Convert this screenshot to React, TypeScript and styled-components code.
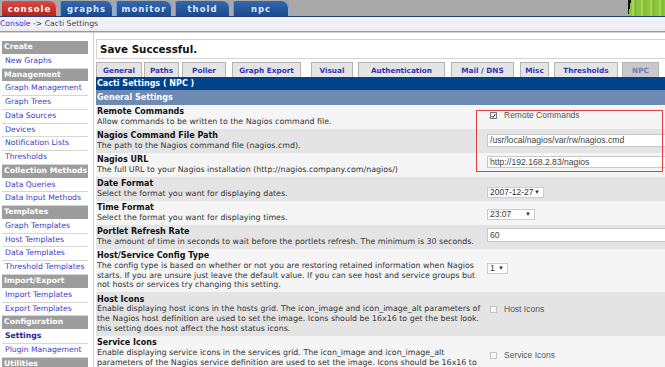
import React from 'react';
import styled, { createGlobalStyle } from 'styled-components';

const GlobalStyle = createGlobalStyle`
  html, body {
    margin: 0;
    padding: 0;
    background: #ffffff;
    overflow: hidden;
  }
  body {
    font-family: "DejaVu Sans", Verdana, sans-serif;
  }
`;

const Page = styled.div`
  width: 665px;
  height: 367px;
  overflow: hidden;
  display: flex;
  flex-direction: column;
`;

/* ---------- top navigation ---------- */

const TopBar = styled.div`
  height: 16px;
  flex: none;
  display: flex;
  align-items: flex-end;
  gap: 3px;
  padding-left: 2px;
  background: #a9a9a9;
  border-bottom: 1px solid #23407a;
`;

const TopTab = styled.div<{ $active?: boolean; $w: number }>`
  width: ${p => p.$w}px;
  height: 15px;
  display: flex;
  align-items: center;
  justify-content: center;
  border-radius: 2px 7px 0 0;
  font: bold 8.5px "DejaVu Sans", Verdana, sans-serif;
  letter-spacing: 1px;
  color: ${p => (p.$active ? '#ffffff' : '#dce6f6')};
  background: ${p =>
    p.$active
      ? 'linear-gradient(#d64c45, #b3241f)'
      : 'linear-gradient(#3467ad, #1c4b8e)'};
  box-shadow: ${p =>
    p.$active
      ? 'inset -1px 0 0 #e88a84'
      : 'inset 1px 0 0 #7198d0, inset -1px 0 0 #8fb0de'};
`;

const Corner = styled.div`
  margin-left: auto;
  width: 37px;
  height: 16px;
  background:
    linear-gradient(100deg, #111 0 3px, transparent 3px),
    repeating-linear-gradient(90deg, #8cc43c 0 4px, #a6d65a 4px 6px, #86bd36 6px 9px);
`;

const Breadcrumb = styled.div`
  height: 14px;
  flex: none;
  line-height: 14px;
  font-size: 7.7px;
  color: #444;
  background: linear-gradient(#f3f4fa 0, #eceef6 40%, #f4f2f8 60%, #e9e9ef 100%);
  border-bottom: 1px solid #9a9a9a;
  box-shadow: 0 1px 0 #d4d4d4;
  white-space: nowrap;
`;

const Crumb = styled.span`
  color: #3535c8;
`;

/* ---------- layout ---------- */

const Body = styled.div`
  flex: 1;
  min-height: 0;
  display: flex;
`;

const Sidebar = styled.div`
  width: 86px;
  flex: none;
  padding: 9px 5px 0 2px;
  border-right: 1px solid #cfcfcf;
`;

const MenuHeader = styled.div`
  height: 12.78px;
  line-height: 12.78px;
  padding-left: 2px;
  background: #9d9d9d;
  border-bottom: 1px solid #ffffff;
  color: #ffffff;
  font-weight: bold;
  font-size: 7.7px;
  white-space: nowrap;
  overflow: hidden;
`;

const MenuItem = styled.div<{ $active?: boolean }>`
  height: 12.78px;
  line-height: 12.78px;
  padding-left: 3px;
  border-bottom: 1px solid #d6d6d6;
  font-size: 7.7px;
  font-weight: ${p => (p.$active ? 'bold' : 'normal')};
  color: ${p => (p.$active ? '#1c1c96' : '#3b3bc4')};
  white-space: nowrap;
  overflow: hidden;
`;

const Main = styled.div`
  flex: 1;
  min-width: 0;
  padding: 7px 0 0 2px;
  overflow: hidden;
`;

const SaveBox = styled.div`
  height: 18px;
  line-height: 18px;
  border: 1px solid #d4d4d4;
  border-right: none;
  padding-left: 3px;
  font-weight: bold;
  font-size: 10.3px;
  color: #111;
`;

const TabRow = styled.div`
  display: flex;
  align-items: flex-end;
  height: 15px;
  margin-top: 3px;
`;

const Tab = styled.div<{ $w: number; $ml: number; $active?: boolean }>`
  width: ${p => p.$w}px;
  margin-left: ${p => p.$ml}px;
  height: 15px;
  box-sizing: border-box;
  display: flex;
  align-items: center;
  justify-content: center;
  border: 1px solid #b4b4b4;
  border-bottom: none;
  background: ${p => (p.$active ? '#c9c9c9' : '#e4e4e4')};
  color: ${p => (p.$active ? '#7878bc' : '#3333b3')};
  font-weight: bold;
  font-size: 7.3px;
  white-space: nowrap;
`;

const Table = styled.div`
  position: relative;
`;

const TitleBar = styled.div`
  height: 13px;
  line-height: 13px;
  padding-left: 1px;
  background: #01438b;
  color: #ffffff;
  font-weight: bold;
  font-size: 8px;
`;

const SectionBar = styled.div`
  height: 15px;
  line-height: 15px;
  padding-left: 1px;
  background: #6e8ab2;
  color: #ffffff;
  font-weight: bold;
  font-size: 8px;
`;

const Row = styled.div<{ $alt: boolean }>`
  display: grid;
  grid-template-columns: 390px 1fr;
  background: ${p => (p.$alt ? '#e4e4e4' : '#f5f5f5')};
`;

const Label = styled.div`
  padding: 2.2px 0 2.2px 1px;
  line-height: 9.8px;
  white-space: nowrap;
`;

const Title = styled.div`
  font-weight: bold;
  font-size: 8px;
  color: #111;
`;

const Desc = styled.div`
  font-size: 7.9px;
  color: #333;
`;

const Value = styled.div<{ $top: number }>`
  padding: ${p => p.$top}px 0 0 1px;
  display: flex;
  align-items: flex-start;
  gap: 7px;
  font-family: "Liberation Sans", Arial, sans-serif;
  font-size: 8.5px;
  color: #555;
  white-space: nowrap;
`;

const TextInput = styled.input<{ $h: number }>`
  width: 190px;
  height: ${p => p.$h}px;
  box-sizing: border-box;
  margin: 0;
  padding: 0 2px;
  border: 1px solid #c8c8c8;
  background: #ffffff;
  font-family: "Liberation Sans", Arial, sans-serif;
  font-size: 8.6px;
  color: #444;
  outline: none;
`;

const SelectBox = styled.div<{ $w: number }>`
  width: ${p => p.$w}px;
  height: 11px;
  box-sizing: border-box;
  display: flex;
  align-items: center;
  justify-content: space-between;
  padding: 0 3px 0 2px;
  border: 1px solid #cccccc;
  background: #ffffff;
  font-size: 8.5px;
  color: #333;
`;

const Arrow = styled.span`
  font-size: 6px;
  color: #333;
`;

const CheckBox = styled.span<{ $on?: boolean }>`
  width: 7px;
  height: 7px;
  margin: 1px 0 0 3px;
  box-sizing: border-box;
  display: inline-flex;
  align-items: center;
  justify-content: center;
  border: 1px solid ${p => (p.$on ? '#7a7a7a' : '#c4c4c4')};
  background: ${p => (p.$on ? '#f2f2f2' : '#f8f8f8')};
`;

const CheckLabel = styled.span`
  line-height: 9px;
`;

const Highlight = styled.div`
  position: absolute;
  left: 380px;
  top: 33px;
  width: 187px;
  height: 62px;
  border: 1px solid #e04040;
  box-sizing: border-box;
  pointer-events: none;
`;

/* ---------- data ---------- */

const topTabs = [
  { name: 'console', w: 55, active: true },
  { name: 'graphs', w: 53 },
  { name: 'monitor', w: 56 },
  { name: 'thold', w: 55 },
  { name: 'npc', w: 56 },
];

const menu: { header: string; items: string[] }[] = [
  { header: 'Create', items: ['New Graphs'] },
  {
    header: 'Management',
    items: ['Graph Management', 'Graph Trees', 'Data Sources', 'Devices', 'Notification Lists', 'Thresholds'],
  },
  { header: 'Collection Methods', items: ['Data Queries', 'Data Input Methods'] },
  { header: 'Templates', items: ['Graph Templates', 'Host Templates', 'Data Templates', 'Threshold Templates'] },
  { header: 'Import/Export', items: ['Import Templates', 'Export Templates'] },
  { header: 'Configuration', items: ['Settings', 'Plugin Management'] },
  { header: 'Utilities', items: [] },
];

const tabs = [
  { name: 'General', w: 46, ml: 0 },
  { name: 'Paths', w: 35, ml: 2 },
  { name: 'Poller', w: 44, ml: 3 },
  { name: 'Graph Export', w: 69, ml: 6 },
  { name: 'Visual', w: 42, ml: 10 },
  { name: 'Authentication', w: 87, ml: 5 },
  { name: 'Mail / DNS', w: 63, ml: 6 },
  { name: 'Misc', w: 29, ml: 6 },
  { name: 'Thresholds', w: 64, ml: 5 },
  { name: 'NPC', w: 37, ml: 4, active: true },
];

type Control =
  | { kind: 'check'; label: string; on?: boolean }
  | { kind: 'text'; value: string; h: number }
  | { kind: 'select'; value: string; w: number };

interface Setting {
  title: string;
  lines: string[];
  top: number;
  control: Control;
}

const settings: Setting[] = [
  {
    title: 'Remote Commands',
    lines: ['Allow commands to be written to the Nagios command file.'],
    top: 6,
    control: { kind: 'check', label: 'Remote Commands', on: true },
  },
  {
    title: 'Nagios Command File Path',
    lines: ['The path to the Nagios command file (nagios.cmd).'],
    top: 5,
    control: { kind: 'text', value: '/usr/local/nagios/var/rw/nagios.cmd', h: 13 },
  },
  {
    title: 'Nagios URL',
    lines: ['The full URL to your Nagios installation (http://nagios.company.com/nagios/)'],
    top: 3,
    control: { kind: 'text', value: 'http://192.168.2.83/nagios', h: 12 },
  },
  {
    title: 'Date Format',
    lines: ['Select the format you want for displaying dates.'],
    top: 10,
    control: { kind: 'select', value: '2007-12-27', w: 57 },
  },
  {
    title: 'Time Format',
    lines: ['Select the format you want for displaying times.'],
    top: 8,
    control: { kind: 'select', value: '23:07', w: 48 },
  },
  {
    title: 'Portlet Refresh Rate',
    lines: ['The amount of time in seconds to wait before the portlets refresh. The minimum is 30 seconds.'],
    top: 3,
    control: { kind: 'text', value: '60', h: 14 },
  },
  {
    title: 'Host/Service Config Type',
    lines: [
      'The config type is based on whether or not you are restoring retained information when Nagios',
      'starts. If you are unsure just leave the default value. If you can see host and service groups but',
      'not hosts or services try changing this setting.',
    ],
    top: 14,
    control: { kind: 'select', value: '1', w: 21 },
  },
  {
    title: 'Host Icons',
    lines: [
      'Enable displaying host icons in the hosts grid. The icon_image and icon_image_alt parameters of',
      'the Nagios host definition are used to set the image. Icons should be 16x16 to get the best look.',
      'this setting does not affect the host status icons.',
    ],
    top: 13,
    control: { kind: 'check', label: 'Host Icons' },
  },
  {
    title: 'Service Icons',
    lines: [
      'Enable displaying service icons in the services grid. The icon_image and icon_image_alt',
      'parameters of the Nagios service definition are used to set the image. Icons should be 16x16 to',
      'get the best look. this setting does not affect the service status icons.',
    ],
    top: 15,
    control: { kind: 'check', label: 'Service Icons' },
  },
];

const Tick = () => (
  <svg width="6" height="6" viewBox="0 0 6 6">
    <path d="M0.8 3.2 L2.4 4.8 L5.3 1" fill="none" stroke="#333" strokeWidth="1.2" />
  </svg>
);

const renderControl = (c: Control) => {
  switch (c.kind) {
    case 'check':
      return (
        <>
          <CheckBox $on={c.on}>{c.on && <Tick />}</CheckBox>
          <CheckLabel>{c.label}</CheckLabel>
        </>
      );
    case 'text':
      return <TextInput $h={c.h} value={c.value} readOnly />;
    case 'select':
      return (
        <SelectBox $w={c.w}>
          <span>{c.value}</span>
          <Arrow>▼</Arrow>
        </SelectBox>
      );
  }
};

export default function App() {
  return (
    <Page>
      <GlobalStyle />
      <TopBar>
        {topTabs.map(t => (
          <TopTab key={t.name} $w={t.w} $active={t.active}>
            {t.name}
          </TopTab>
        ))}
        <Corner />
      </TopBar>
      <Breadcrumb>
        <Crumb>Console</Crumb> -&gt; Cacti Settings
      </Breadcrumb>
      <Body>
        <Sidebar>
          {menu.map(section => (
            <React.Fragment key={section.header}>
              <MenuHeader>{section.header}</MenuHeader>
              {section.items.map(item => (
                <MenuItem key={item} $active={item === 'Settings'}>
                  {item}
                </MenuItem>
              ))}
            </React.Fragment>
          ))}
        </Sidebar>
        <Main>
          <SaveBox>Save Successful.</SaveBox>
          <TabRow>
            {tabs.map(t => (
              <Tab key={t.name} $w={t.w} $ml={t.ml} $active={t.active}>
                {t.name}
              </Tab>
            ))}
          </TabRow>
          <Table>
            <TitleBar>Cacti Settings ( NPC )</TitleBar>
            <SectionBar>General Settings</SectionBar>
            {settings.map((s, i) => (
              <Row key={s.title} $alt={i % 2 === 1}>
                <Label>
                  <Title>{s.title}</Title>
                  {s.lines.map(line => (
                    <Desc key={line}>{line}</Desc>
                  ))}
                </Label>
                <Value $top={s.top}>{renderControl(s.control)}</Value>
              </Row>
            ))}
            <Highlight />
          </Table>
        </Main>
      </Body>
    </Page>
  );
}
